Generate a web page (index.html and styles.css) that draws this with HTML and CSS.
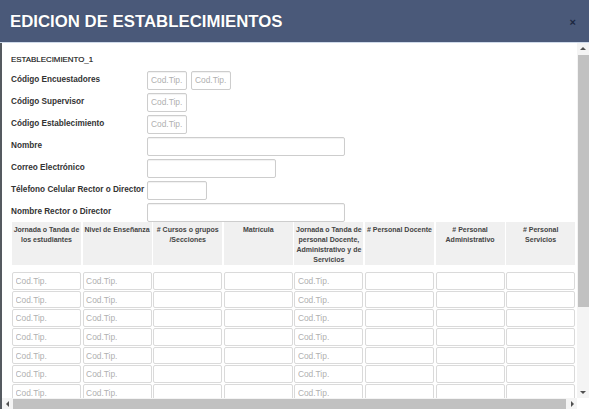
FILE: index.html
```html
<!DOCTYPE html>
<html lang="es">
<head>
<meta charset="utf-8">
<title>Edición de establecimientos</title>
<link rel="stylesheet" href="styles.css">
</head>
<body>
<div class="modal">
  <header class="modal-header">
    <h1 class="modal-title">EDICION DE ESTABLECIMIENTOS</h1>
    <span class="close">×</span>
  </header>
  <div class="modal-body">
    <div class="viewport">
      <div class="content">
        <div class="section-title">ESTABLECIMIENTO_1</div>
        <div class="form">
          <label class="label">Código Encuestadores</label>
          <div class="fields"><input class="inp w-code" placeholder="Cod.Tip."><input class="inp w-code" placeholder="Cod.Tip."></div>
          <label class="label">Código Supervisor</label>
          <div class="fields"><input class="inp w-code" placeholder="Cod.Tip."></div>
          <label class="label">Código Establecimiento</label>
          <div class="fields"><input class="inp w-code" placeholder="Cod.Tip."></div>
          <label class="label">Nombre</label>
          <div class="fields"><input class="inp w-long"></div>
          <label class="label">Correo Electrónico</label>
          <div class="fields"><input class="inp w-mid"></div>
          <label class="label">Télefono Celular Rector o Director</label>
          <div class="fields"><input class="inp w-short"></div>
          <label class="label">Nombre Rector o Director</label>
          <div class="fields"><input class="inp w-long"></div>
        </div>
        <div class="grid-table">
          <div class="th">Jornada o Tanda de los estudiantes</div>
          <div class="th">Nivel de Enseñanza</div>
          <div class="th"># Cursos o grupos /Secciones</div>
          <div class="th">Matrícula</div>
          <div class="th">Jornada o Tanda de personal Docente, Administrativo y de Servicios</div>
          <div class="th"># Personal Docente</div>
          <div class="th"># Personal Administrativo</div>
          <div class="th"># Personal Servicios</div>

          <input class="cell" placeholder="Cod.Tip."><input class="cell" placeholder="Cod.Tip."><input class="cell"><input class="cell"><input class="cell" placeholder="Cod.Tip."><input class="cell"><input class="cell"><input class="cell">
          <input class="cell" placeholder="Cod.Tip."><input class="cell" placeholder="Cod.Tip."><input class="cell"><input class="cell"><input class="cell" placeholder="Cod.Tip."><input class="cell"><input class="cell"><input class="cell">
          <input class="cell" placeholder="Cod.Tip."><input class="cell" placeholder="Cod.Tip."><input class="cell"><input class="cell"><input class="cell" placeholder="Cod.Tip."><input class="cell"><input class="cell"><input class="cell">
          <input class="cell" placeholder="Cod.Tip."><input class="cell" placeholder="Cod.Tip."><input class="cell"><input class="cell"><input class="cell" placeholder="Cod.Tip."><input class="cell"><input class="cell"><input class="cell">
          <input class="cell" placeholder="Cod.Tip."><input class="cell" placeholder="Cod.Tip."><input class="cell"><input class="cell"><input class="cell" placeholder="Cod.Tip."><input class="cell"><input class="cell"><input class="cell">
          <input class="cell" placeholder="Cod.Tip."><input class="cell" placeholder="Cod.Tip."><input class="cell"><input class="cell"><input class="cell" placeholder="Cod.Tip."><input class="cell"><input class="cell"><input class="cell">
          <input class="cell" placeholder="Cod.Tip."><input class="cell" placeholder="Cod.Tip."><input class="cell"><input class="cell"><input class="cell" placeholder="Cod.Tip."><input class="cell"><input class="cell"><input class="cell">
          <input class="cell" placeholder="Cod.Tip."><input class="cell" placeholder="Cod.Tip."><input class="cell"><input class="cell"><input class="cell" placeholder="Cod.Tip."><input class="cell"><input class="cell"><input class="cell">
        </div>
      </div>
    </div>
    <div class="vscroll">
      <div class="sbtn"><span class="arrow up"></span></div>
      <div class="vthumb"></div>
      <div class="spacer"></div>
      <div class="sbtn"><span class="arrow down"></span></div>
    </div>
    <div class="hscroll">
      <div class="sbtn h"><span class="arrow left"></span></div>
      <div class="hthumb"></div>
      <div class="spacer"></div>
      <div class="sbtn h"><span class="arrow right"></span></div>
    </div>
    <div class="corner"></div>
  </div>
</div>
</body>
</html>
```
FILE: styles.css
```css
html, body {
  margin: 0;
  padding: 0;
  height: 409px;
  overflow: hidden;
  background: #ffffff;
  font-family: "Liberation Sans", Arial, sans-serif;
}

.modal {
  width: 589px;
  height: 409px;
  display: flex;
  flex-direction: column;
}

.modal-header {
  flex: none;
  height: 43px;
  box-sizing: border-box;
  padding: 2px 13px 0 10px;
  background: #4a5979;
  border-bottom: 1px solid #cfdaea;
  display: flex;
  align-items: center;
  justify-content: space-between;
}

.modal-title {
  margin: 0;
  font-size: 16.8px;
  line-height: 1;
  font-weight: bold;
  color: #ffffff;
  text-shadow: 0 0 1px rgba(0,0,0,0.3);
}

.close {
  font-size: 11px;
  font-weight: bold;
  line-height: 1;
  color: #1c2740;
}

.modal-body {
  flex: 1;
  display: grid;
  grid-template-columns: 1fr 12px;
  grid-template-rows: 1fr 11px;
  border-left: 2px solid #555a60;
  min-height: 0;
}

.viewport {
  overflow: hidden;
  min-width: 0;
  min-height: 0;
}

.content {
  padding: 12px 0 0 9px;
}

.section-title {
  font-size: 7.9px;
  line-height: 10px;
  color: #111;
  margin-bottom: 6px;
  -webkit-text-stroke: 0.15px #111;
}

.form {
  display: grid;
  grid-template-columns: 136px 1fr;
  row-gap: 3.5px;
  align-items: start;
}

.label {
  font-size: 8.2px;
  font-weight: bold;
  line-height: 10px;
  color: #333;
  padding-top: 3.5px;
  white-space: nowrap;
}

.fields {
  display: flex;
  gap: 4px;
}

.inp {
  box-sizing: border-box;
  height: 18.5px;
  margin: 0;
  padding: 0 0 0 3px;
  border: 1px solid #cdcdcd;
  border-radius: 2px;
  box-shadow: inset 0 1px 1px rgba(0,0,0,0.06);
  background: #fff;
  font-family: "Liberation Sans", Arial, sans-serif;
  font-size: 8.4px;
  color: #333;
}

.inp::placeholder, .cell::placeholder {
  color: #b0b0b0;
  opacity: 1;
}

.w-code { width: 40px; }
.w-long { width: 198px; }
.w-mid { width: 129px; }
.w-short { width: 60px; }

.grid-table {
  margin: 0.5px 0 0 1px;
  display: grid;
  grid-template-columns: repeat(8, 69px);
  grid-template-rows: 49px;
  grid-auto-rows: 17.7px;
  column-gap: 1.6px;
  row-gap: 1px;
  width: max-content;
}

.th {
  background: #f0f0f0;
  font-size: 7px;
  font-weight: bold;
  line-height: 10px;
  color: #444;
  text-align: center;
  padding: 2.5px 1.5px 0;
  margin-bottom: 6px;
}

.cell {
  box-sizing: border-box;
  width: 69px;
  height: 17.7px;
  margin: 0;
  padding: 0 0 0 2.5px;
  border: 1.5px solid #dadada;
  border-radius: 2px;
  background: #fff;
  font-family: "Liberation Sans", Arial, sans-serif;
  font-size: 8.4px;
  color: #333;
}

.vscroll {
  background: #f4f4f4;
  display: flex;
  flex-direction: column;
}

.hscroll {
  background: #f4f4f4;
  display: flex;
  flex-direction: row;
}

.corner {
  background: #ffffff;
}

.sbtn {
  height: 11px;
  flex: none;
  display: flex;
  align-items: center;
  justify-content: center;
}

.sbtn.h {
  width: 10px;
  height: auto;
}

.spacer {
  flex: 1;
}

.vthumb {
  margin: 1px 0 0 1px;
  height: 252px;
  background: #c1c1c1;
  flex: none;
}

.hthumb {
  margin: 1px 0 0 1px;
  width: 553px;
  background: #c1c1c1;
  flex: none;
}

.arrow {
  width: 0;
  height: 0;
  border: 3px solid transparent;
}

.arrow.up { border-bottom-color: #505050; border-top-width: 0; }
.arrow.down { border-top-color: #505050; border-bottom-width: 0; }
.arrow.left { border-right-color: #505050; border-left-width: 0; }
.arrow.right { border-left-color: #505050; border-right-width: 0; }
```
